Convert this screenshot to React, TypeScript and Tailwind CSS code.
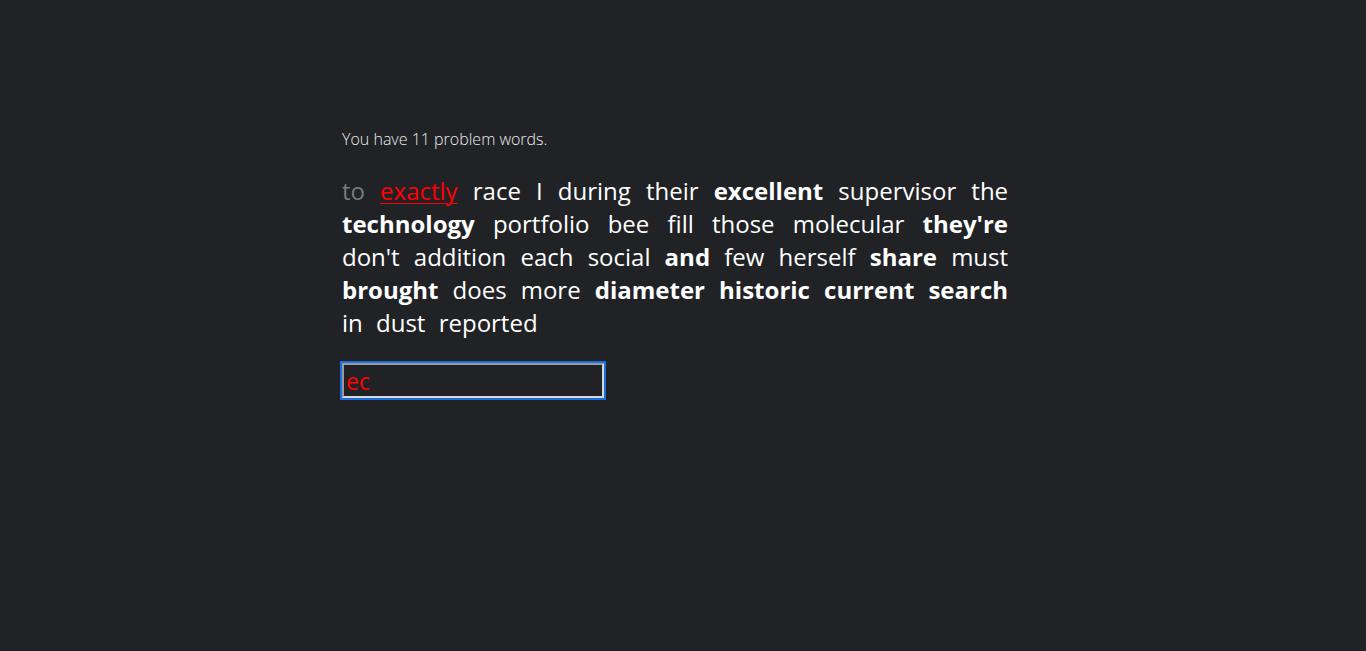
import { useState } from 'react';

type Word = { text: string; bold?: boolean };

const WORDS: Word[] = [
  { text: 'race' }, { text: 'I' }, { text: 'during' }, { text: 'their' },
  { text: 'excellent', bold: true }, { text: 'supervisor' }, { text: 'the' },
  { text: 'technology', bold: true }, { text: 'portfolio' }, { text: 'bee' }, { text: 'fill' },
  { text: 'those' }, { text: 'molecular' }, { text: "they're", bold: true },
  { text: "don't" }, { text: 'addition' }, { text: 'each' }, { text: 'social' },
  { text: 'and', bold: true }, { text: 'few' }, { text: 'herself' }, { text: 'share', bold: true },
  { text: 'must' }, { text: 'brought', bold: true }, { text: 'does' }, { text: 'more' },
  { text: 'diameter', bold: true }, { text: 'historic', bold: true }, { text: 'current', bold: true },
  { text: 'search', bold: true }, { text: 'in' }, { text: 'dust' }, { text: 'reported' },
];

export default function App() {
  const [value, setValue] = useState('ec');

  return (
    <div className="min-h-[651px] bg-[#212226] font-['Open_Sans',sans-serif] text-white">
      <div className="ml-[342px] w-[666px] pt-[128px]">
        <p className="text-[16px] font-light leading-[22px] text-[#ececec]">You have 11 problem words.</p>

        <p className="mt-[24px] text-justify text-[24px] leading-[33px] [word-spacing:7px]">
          <span className="text-[#7a7a7a]">to</span>{' '}
          <span className="text-[#ff0000] underline decoration-1 underline-offset-[3px]">exactly</span>{' '}
          {WORDS.map((w, i) => (
            <span key={i}>
              <span className={w.bold ? 'font-bold' : ''}>{w.text}</span>{' '}
            </span>
          ))}
        </p>

        <input
          autoFocus
          value={value}
          onChange={(e) => setValue(e.target.value)}
          className="mt-[24px] h-[35px] w-[262px] border-2 border-[#d8d8d8] border-t-[#9a9a9a] border-l-[#9a9a9a] bg-[#212226] px-[2px] text-[23px] text-[#ff0000] outline-2 outline-[#1a6fe0] outline-offset-0"
        />
      </div>
    </div>
  );
}
